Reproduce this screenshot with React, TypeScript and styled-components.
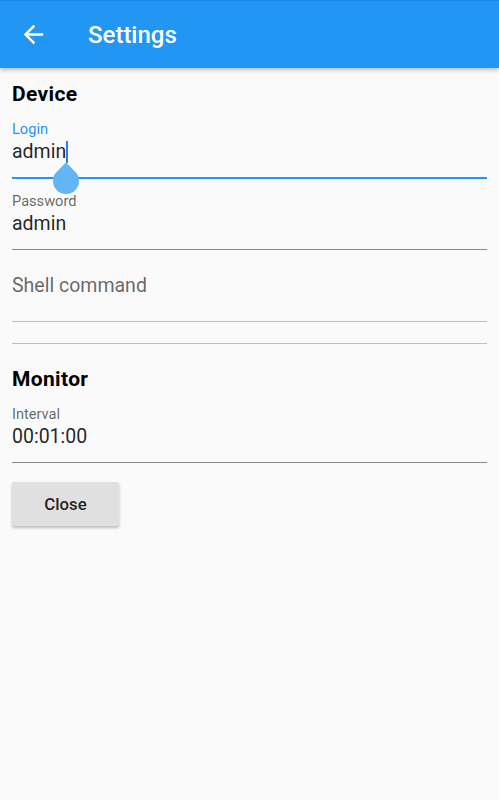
import React from 'react';
import styled, { createGlobalStyle } from 'styled-components';

const GlobalStyle = createGlobalStyle`
  html, body {
    margin: 0;
    padding: 0;
    background: #fafafa;
    font-family: Roboto, 'Noto Sans', sans-serif;
  }
`;

const Page = styled.div`
  min-height: 800px;
  background: #fafafa;
`;

const AppBar = styled.header`
  height: 68px;
  background: #2196f3;
  display: flex;
  align-items: center;
  box-shadow: 0 2px 4px rgba(0, 0, 0, 0.25);
  border-top: 1px solid #1e88e5;
  box-sizing: border-box;
`;

const BackButton = styled.button`
  width: 29px;
  height: 29px;
  margin-left: 19px;
  padding: 0;
  border: none;
  background: none;
  display: flex;
  align-items: center;
  justify-content: center;
  cursor: pointer;
`;

const Title = styled.h1`
  margin: 0 0 0 40px;
  font-size: 24px;
  font-weight: 500;
  color: #ffffff;
`;

const Content = styled.main`
  padding: 14px 12px 0 12px;
`;

const SectionTitle = styled.h2`
  margin: 0;
  font-size: 21px;
  line-height: 24px;
  letter-spacing: 0.35px;
  font-weight: 700;
  color: #000000;
`;

const Field = styled.div<{ $focused?: boolean; $empty?: boolean }>`
  position: relative;
  padding: 14px 0 13px 0;
  border-bottom: ${(p) =>
    p.$focused ? '2px solid #2196f3' : p.$empty ? '1px solid #bdbdbd' : '1px solid #8a8a8a'};
  margin-bottom: ${(p) => (p.$focused ? '-1px' : '0')};
`;

const Label = styled.div<{ $focused?: boolean }>`
  font-size: 14.6px;
  line-height: 18px;
  color: ${(p) => (p.$focused ? '#2196f3' : 'rgba(0, 0, 0, 0.6)')};
  margin-bottom: 2px;
`;

const Value = styled.div`
  font-size: 19.5px;
  line-height: 24px;
  color: rgba(0, 0, 0, 0.87);
`;

const Placeholder = styled.div`
  font-size: 19.5px;
  line-height: 44px;
  color: rgba(0, 0, 0, 0.6);
`;

const Cursor = styled.span`
  position: absolute;
  left: 54px;
  top: 35px;
  width: 2px;
  height: 22px;
  background: #3b7ddd;
`;

const Handle = styled.span`
  position: absolute;
  left: 41px;
  top: 62px;
  width: 26px;
  height: 26px;
  background: #64b5f6;
  border-radius: 0 50% 50% 50%;
  transform: rotate(45deg);
`;

const Divider = styled.hr`
  border: none;
  border-top: 1px solid #bdbdbd;
  margin: 21px 0 23px 0;
`;

const CloseButton = styled.button`
  margin-top: 19px;
  width: 107px;
  height: 44px;
  border: none;
  border-radius: 2px;
  background: #e0e0e0;
  font-family: Roboto, 'Noto Sans', sans-serif;
  font-size: 16.8px;
  font-weight: 500;
  color: rgba(0, 0, 0, 0.87);
  box-shadow: 0 2px 3px rgba(0, 0, 0, 0.25);
  cursor: pointer;
`;

const ArrowBack = () => (
  <svg width="29" height="29" viewBox="0 0 24 24" fill="#ffffff">
    <path d="M20 11H7.83l5.59-5.59L12 4l-8 8 8 8 1.41-1.41L7.83 13H20v-2z" />
  </svg>
);

const App: React.FC = () => {
  return (
    <Page>
      <GlobalStyle />
      <AppBar>
        <BackButton aria-label="Back">
          <ArrowBack />
        </BackButton>
        <Title>Settings</Title>
      </AppBar>
      <Content>
        <SectionTitle>Device</SectionTitle>
        <Field $focused>
          <Label $focused>Login</Label>
          <Value>admin</Value>
          <Cursor />
          <Handle />
        </Field>
        <Field>
          <Label>Password</Label>
          <Value>admin</Value>
        </Field>
        <Field $empty>
          <Placeholder>Shell command</Placeholder>
        </Field>
        <Divider />
        <SectionTitle>Monitor</SectionTitle>
        <Field>
          <Label>Interval</Label>
          <Value>00:01:00</Value>
        </Field>
        <CloseButton>Close</CloseButton>
      </Content>
    </Page>
  );
};

export default App;
